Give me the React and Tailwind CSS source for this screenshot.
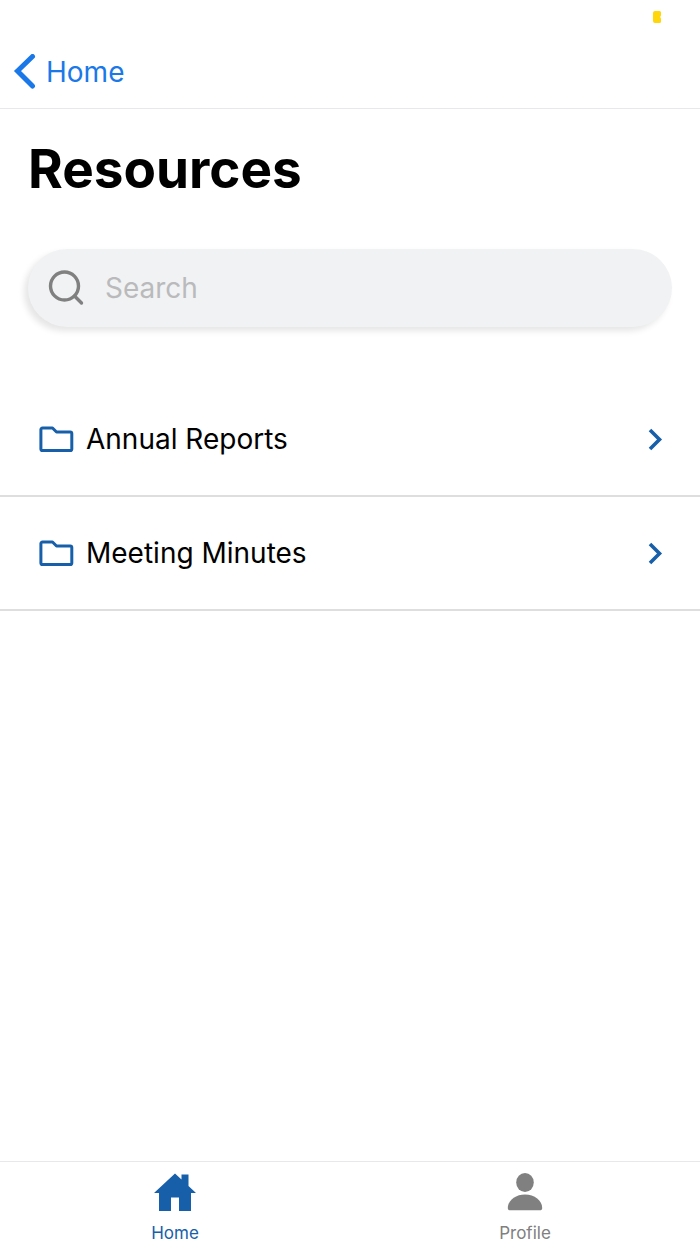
import React, { useState } from 'react';

const folders = ['Annual Reports', 'Meeting Minutes'];

const FolderIcon = () => (
  <svg className="w-9 h-7 shrink-0" viewBox="0 0 36 28" fill="none" stroke="#175fa9" strokeWidth="3" strokeLinejoin="round" aria-hidden="true">
    <path d="M4.500 3h10l4 4h13.700a1.600 1.600 0 0 1 1.600 1.600V24a1.600 1.600 0 0 1-1.600 1.600H4.500A1.600 1.600 0 0 1 2.900 24V4.600A1.600 1.600 0 0 1 4.500 3Z" />
  </svg>
);

const ChevronIcon = () => (
  <svg className="w-4 h-6 shrink-0" viewBox="0 0 16 24" fill="none" stroke="#175fa9" strokeWidth="3.6" aria-hidden="true">
    <path d="M2 3l9.500 9.500L2 22" />
  </svg>
);

const App = () => {
  const [query, setQuery] = useState('');

  const visible = folders.filter((name) => name.toLowerCase().includes(query.toLowerCase()));

  return (
    <div className="min-h-screen flex flex-col bg-white text-black font-['Inter',sans-serif]">
      <div className="h-9 flex justify-end pt-[11px] pr-[39px]">
        <svg className="w-2 h-3" viewBox="0 0 8 12" fill="#ffd60a" aria-hidden="true">
          <path d="M2 0h4.5A1.5 1.5 0 0 1 8 1.500v2.700L7.200 6 8 7.800v2.700A1.500 1.500 0 0 1 6.500 12H2a2 2 0 0 1-2-2V2a2 2 0 0 1 2-2Z" />
        </svg>
      </div>

      <header className="h-[73px] flex items-center px-3 border-b border-[#e8e8ea]">
        <a href="#home" className="flex items-center gap-2 text-[28px] leading-9 text-[#1a78e8]">
          <svg className="w-[26px] h-9" viewBox="0 0 26 36" fill="none" stroke="currentColor" strokeWidth="5" strokeLinecap="round" strokeLinejoin="miter" aria-hidden="true">
            <path d="M20.500 2.500L5.500 17l15 15" />
          </svg>
          Home
        </a>
      </header>

      <main className="grow">
        <h1 className="px-7 pt-[29px] text-[53px] leading-[63px] font-bold">Resources</h1>

        <div className="px-7 pt-12">
          <label className="h-[78px] flex items-center gap-[21px] pl-5 pr-7 rounded-full bg-[#f1f2f4] shadow-[-4px_4px_6px_rgba(0,0,0,0.1)]">
            <svg className="w-9 h-9 shrink-0" viewBox="0 0 36 36" fill="none" stroke="#808080" strokeWidth="3.4" strokeLinecap="round" aria-hidden="true">
              <circle cx="16.500" cy="16" r="14" />
              <path d="M26.500 26l7 7" />
            </svg>
            <input
              type="text"
              aria-label="Search"
              placeholder="Search"
              value={query}
              onChange={(e) => setQuery(e.target.value)}
              className="grow min-w-0 bg-transparent text-[28px] leading-9 placeholder:text-[#bababc] outline-none"
            />
          </label>
        </div>

        <ul className="pt-14">
          {visible.map((name) => (
            <li key={name} className="border-b-2 border-[#dedede]">
              <button type="button" className="w-full h-28 flex items-center gap-3 pl-[38px] pr-9 text-left text-[28px] leading-9">
                <FolderIcon />
                <span className="grow">{name}</span>
                <ChevronIcon />
              </button>
            </li>
          ))}
        </ul>
      </main>

      <nav className="h-[83px] grid grid-cols-2 border-t border-[#e8e8ea] text-[17px] leading-5">
        <a href="#home" className="flex flex-col items-center gap-3 pt-[11px] text-[#175fa9]">
          <svg className="w-[42px] h-[38px]" viewBox="0 0 42 38" fill="currentColor" aria-hidden="true">
            <path d="M21 0.500l6.500 6V1.500h7v11.600L42 20h-5v18H25V24.500h-8V38H5V20H0Z" />
          </svg>
          Home
        </a>
        <a href="#profile" className="flex flex-col items-center gap-3 pt-[11px] text-[#808080]">
          <svg className="w-[42px] h-[38px]" viewBox="0 0 42 38" fill="currentColor" aria-hidden="true">
            <ellipse cx="21" cy="9.500" rx="8.800" ry="9.400" />
            <path d="M21 21.500c9.500 0 17.200 6 17.200 13.500 0 1.500-.800 2.300-2.300 2.300H6.100c-1.500 0-2.300-.800-2.300-2.300C3.800 27.500 11.500 21.500 21 21.500Z" />
          </svg>
          Profile
        </a>
      </nav>
    </div>
  );
};

export default App;
